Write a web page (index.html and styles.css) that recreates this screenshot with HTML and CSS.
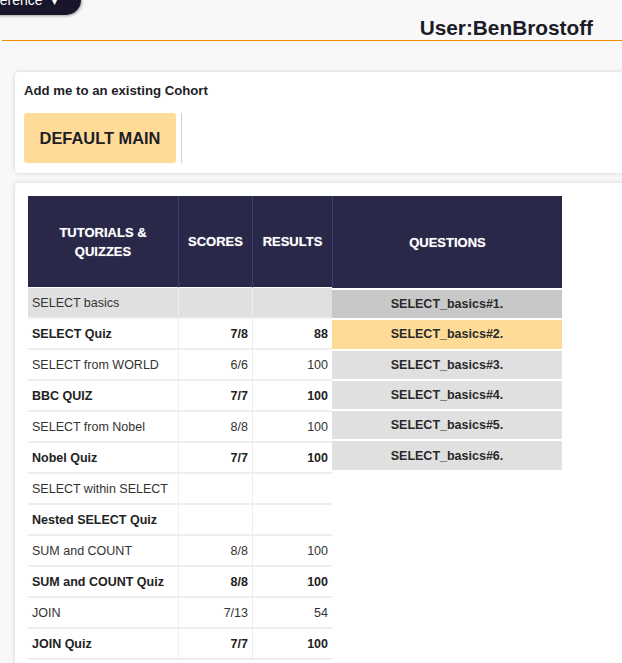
FILE: index.html
```html
<!DOCTYPE html>
<html lang="en">
<head>
<meta charset="utf-8">
<title>Progress</title>
<link rel="stylesheet" href="styles.css">
</head>
<body>
<header class="topbar">
  <div class="menu-pill">Reference <span class="caret">&#9662;</span></div>
  <div class="user">User:BenBrostoff</div>
</header>

<section class="card cohort">
  <div class="cohort-title">Add me to an existing Cohort</div>
  <div class="cohort-row">
    <button class="cohort-btn">DEFAULT MAIN</button>
    <div class="cohort-sep"></div>
  </div>
</section>

<section class="card results">
  <div class="tables">
    <table class="progress">
      <thead>
        <tr>
          <th class="c1">TUTORIALS &amp;<br>QUIZZES</th>
          <th class="c2">SCORES</th>
          <th class="c3">RESULTS</th>
        </tr>
      </thead>
      <tbody>
        <tr class="current"><td>SELECT basics</td><td></td><td></td></tr>
        <tr class="quiz"><td>SELECT Quiz</td><td>7/8</td><td>88</td></tr>
        <tr><td>SELECT from WORLD</td><td>6/6</td><td>100</td></tr>
        <tr class="quiz"><td>BBC QUIZ</td><td>7/7</td><td>100</td></tr>
        <tr><td>SELECT from Nobel</td><td>8/8</td><td>100</td></tr>
        <tr class="quiz"><td>Nobel Quiz</td><td>7/7</td><td>100</td></tr>
        <tr><td>SELECT within SELECT</td><td></td><td></td></tr>
        <tr class="quiz"><td>Nested SELECT Quiz</td><td></td><td></td></tr>
        <tr><td>SUM and COUNT</td><td>8/8</td><td>100</td></tr>
        <tr class="quiz"><td>SUM and COUNT Quiz</td><td>8/8</td><td>100</td></tr>
        <tr><td>JOIN</td><td>7/13</td><td>54</td></tr>
        <tr class="quiz"><td>JOIN Quiz</td><td>7/7</td><td>100</td></tr>
      </tbody>
    </table>

    <table class="questions">
      <thead>
        <tr><th>QUESTIONS</th></tr>
      </thead>
      <tbody>
        <tr class="q-active"><td>SELECT_basics#1.</td></tr>
        <tr class="q-wrong"><td>SELECT_basics#2.</td></tr>
        <tr><td>SELECT_basics#3.</td></tr>
        <tr><td>SELECT_basics#4.</td></tr>
        <tr><td>SELECT_basics#5.</td></tr>
        <tr><td>SELECT_basics#6.</td></tr>
      </tbody>
    </table>
  </div>
</section>
</body>
</html>
```

FILE: styles.css
```css
html, body {
  overflow-x: hidden;
}

body {
  margin: 0;
  background: #f8f8f8;
  font-family: "Liberation Sans", Arial, sans-serif;
  color: #333;
}

.topbar {
  display: flex;
  justify-content: space-between;
  align-items: flex-start;
  height: 40px;
  margin-left: 2px;
  border-bottom: 1px solid #f08c00;
}

.menu-pill {
  height: 30px;
  margin-top: -15px;
  margin-left: -36px;
  padding: 0 24px 0 12px;
  background: #17162a;
  color: #fff;
  font-size: 14px;
  line-height: 30px;
  border-radius: 15px;
  box-shadow: 1px 1px 3px rgba(0, 0, 0, 0.35);
  white-space: nowrap;
}

.caret {
  margin-left: 6px;
  font-size: 10px;
}

.user {
  margin-top: 16px;
  margin-right: 29px;
  font-size: 20.8px;
  line-height: 24px;
  font-weight: bold;
  color: #1c1c28;
}

.card {
  background: #fff;
  margin-left: 15px;
  margin-right: -20px;
  border-radius: 4px;
  box-shadow: 0 0 4px rgba(0, 0, 0, 0.16);
}

.cohort {
  margin-top: 31px;
  padding: 11px 9px 10px;
}

.cohort-title {
  font-size: 13.2px;
  line-height: 16px;
  font-weight: bold;
  color: #1e1e28;
}

.cohort-row {
  display: flex;
  margin-top: 14px;
}

.cohort-btn {
  width: 152px;
  height: 50px;
  border: none;
  border-radius: 3px;
  background: #fedb97;
  color: #1e1e28;
  font-family: "Liberation Sans", Arial, sans-serif;
  font-size: 16.4px;
  font-weight: bold;
  padding: 0;
}

.cohort-sep {
  width: 0;
  height: 50px;
  margin-left: 5px;
  border-left: 1px solid #cfcfcf;
}

.results {
  margin-top: 10px;
  padding: 13px 13px 40px;
}

.tables {
  display: flex;
  align-items: flex-start;
}

table {
  border-collapse: separate;
  border-spacing: 0;
}

.progress {
  width: 304px;
  table-layout: fixed;
}

.progress th,
.questions th {
  background: #2a2849;
  color: #fff;
  font-size: 13px;
  line-height: 19px;
  font-weight: bold;
  text-align: center;
  vertical-align: middle;
  padding: 0;
  text-shadow: 0 0 1px rgba(255, 255, 255, 0.5);
}

.progress th {
  height: 91px;
  border-bottom: 1px solid #fff;
}

.progress .c1 { width: 150px; border-right: 1px solid #3f3c7a; }
.progress .c2 { width: 73px; border-right: 1px solid #3f3c7a; }
.progress .c3 { width: 79px; }

.progress td {
  height: 29px;
  padding: 0 4px;
  font-size: 12.5px;
  color: #333;
  border-bottom: 2px solid #eee;
  white-space: nowrap;
  vertical-align: middle;
  text-align: right;
}

.progress td:first-child {
  text-align: left;
}

.progress td:nth-child(1),
.progress td:nth-child(2) {
  border-right: 1px solid #eee;
}

.progress .current td {
  background: #e0e0e0;
}

.progress .quiz td {
  font-weight: bold;
  color: #222;
}

.questions {
  width: 230px;
}

.questions th {
  height: 92px;
  border-left: 1px solid #3f3c7a;
}

.questions td {
  height: 28.3px;
  padding: 0;
  border-top: 2px solid #fff;
  background: #e0e0e0;
  text-align: center;
  font-size: 12.5px;
  font-weight: bold;
  color: #2a2a2a;
  vertical-align: middle;
}

.questions .q-active td {
  background: #c8c8c8;
}

.questions .q-wrong td {
  background: #fedb97;
}
```
